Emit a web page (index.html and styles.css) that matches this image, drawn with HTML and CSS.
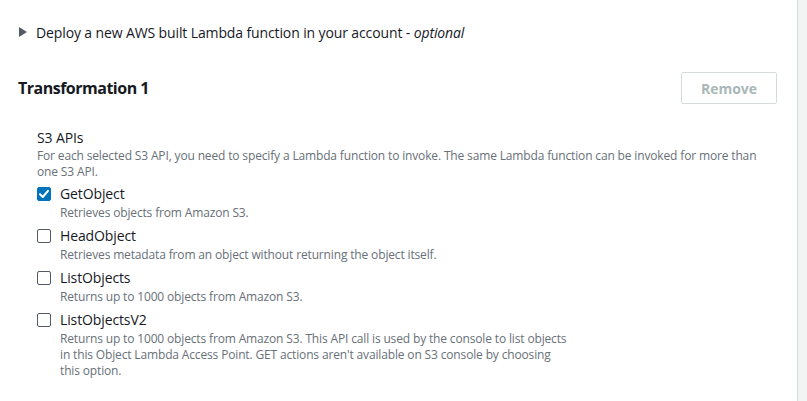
FILE: index.html
```html
<!DOCTYPE html>
<html>
<head>
<meta charset="utf-8">
<link rel="stylesheet" href="styles.css">
</head>
<body>
<div class="page">
  <div class="panel">
    <div class="expander">
      <span class="caret"></span>
      <span class="expander-text">Deploy a new AWS built Lambda function in your account - <em>optional</em></span>
    </div>
    <div class="header">
      <h2 class="title">Transformation 1</h2>
      <button class="btn-remove" disabled>Remove</button>
    </div>
    <div class="field">
      <div class="field-label">S3 APIs</div>
      <div class="field-desc">For each selected S3 API, you need to specify a Lambda function to invoke. The same Lambda function can be invoked for more than one S3 API.</div>
      <div class="options">
        <div class="option">
          <span class="box checked">
            <svg viewBox="0 0 14 14" width="14" height="14"><path d="M3 7.2 L5.8 10 L11 3.8" fill="none" stroke="#fff" stroke-width="2" stroke-linecap="round" stroke-linejoin="round"/></svg>
          </span>
          <div class="option-body">
            <div class="option-label">GetObject</div>
            <div class="option-desc">Retrieves objects from Amazon S3.</div>
          </div>
        </div>
        <div class="option">
          <span class="box"></span>
          <div class="option-body">
            <div class="option-label">HeadObject</div>
            <div class="option-desc">Retrieves metadata from an object without returning the object itself.</div>
          </div>
        </div>
        <div class="option">
          <span class="box"></span>
          <div class="option-body">
            <div class="option-label">ListObjects</div>
            <div class="option-desc">Returns up to 1000 objects from Amazon S3.</div>
          </div>
        </div>
        <div class="option">
          <span class="box"></span>
          <div class="option-body">
            <div class="option-label">ListObjectsV2</div>
            <div class="option-desc">Returns up to 1000 objects from Amazon S3. This API call is used by the console to list objects<br>in this Object Lambda Access Point. GET actions aren't available on S3 console by choosing<br>this option.</div>
          </div>
        </div>
      </div>
    </div>
  </div>
  <div class="side"></div>
</div>
</body>
</html>
```

FILE: styles.css
```css
* { box-sizing: border-box; }
html, body {
  margin: 0;
  padding: 0;
  height: 100%;
}
body {
  background: #f2f3f3;
  font-family: "Open Sans", "Noto Sans", sans-serif;
  color: #16191f;
}
.page {
  display: flex;
  height: 401px;
}
.panel {
  width: 798px;
  background: #fff;
  border-right: 1px solid #d5dbdb;
  padding: 22px 20px 0 18px;
}
.side {
  flex: 1;
  background: #f2f3f3;
}
.expander {
  display: flex;
  align-items: center;
  height: 20px;
  font-size: 14px;
  letter-spacing: -0.12px;
}
.caret {
  width: 0;
  height: 0;
  margin-left: 1px;
  border-left: 8px solid #545b64;
  border-top: 5px solid transparent;
  border-bottom: 5px solid transparent;
  margin-right: 9px;
}
.expander-text em { font-style: italic; }
.header {
  display: flex;
  justify-content: space-between;
  align-items: center;
  margin-top: 30px;
  height: 32px;
}
.title {
  margin: 0;
  font-size: 16px;
  font-weight: 700;
  letter-spacing: -0.5px;
  color: #16191f;
}
.btn-remove {
  width: 96px;
  height: 32px;
  border: 1px solid #d5dbdb;
  border-radius: 2px;
  background: #fff;
  color: #aab7b8;
  font-family: inherit;
  font-size: 14px;
  font-weight: 700;
  padding: 0;
}
.field {
  margin-top: 24px;
  padding-left: 19px;
}
.field-label {
  font-size: 14px;
  line-height: 20px;
  letter-spacing: -0.12px;
}
.field-desc {
  font-size: 12px;
  line-height: 16px;
  color: #687078;
  letter-spacing: -0.15px;
}
.options {
  margin-top: 3px;
  display: flex;
  flex-direction: column;
  gap: 4px;
}
.option {
  display: flex;
  align-items: flex-start;
}
.box {
  width: 14px;
  height: 14px;
  margin-top: 4px;
  margin-right: 9px;
  border: 1px solid #545b64;
  border-radius: 2px;
  flex: none;
  display: flex;
}
.box.checked {
  background: #0073bb;
  border-color: #0073bb;
}
.box.checked svg { margin: -1px; }
.option-label {
  font-size: 14px;
  line-height: 22px;
  letter-spacing: -0.12px;
}
.option-desc {
  font-size: 12px;
  line-height: 16px;
  color: #687078;
  letter-spacing: -0.15px;
}
```
